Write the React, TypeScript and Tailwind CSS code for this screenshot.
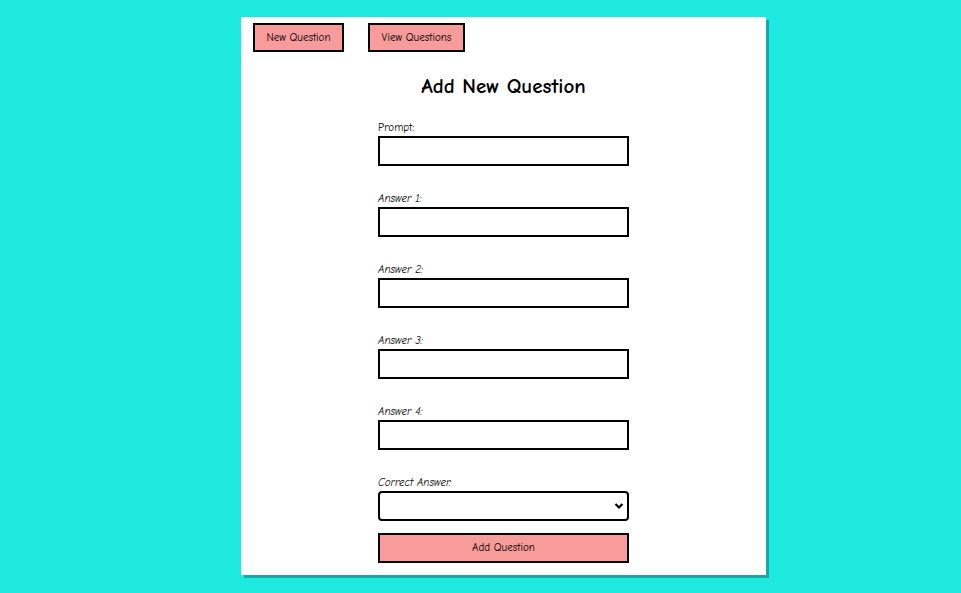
import React from "react";

const font = { fontFamily: '"Comic Sans MS", "Comic Neue", "DejaVu Sans", sans-serif' };

const Field: React.FC<{label: string; italic?: boolean}> = ({label, italic}) => (
  <div className="flex flex-col">
    <label className={`h-[14px] text-[11px] leading-[12px] text-black ${italic ? "italic" : ""}`}>{label}</label>
    <input type="text" className="h-[30px] w-[251px] border-2 border-black bg-white" />
  </div>
);

export default function App() {
  return (
    <div className="min-h-[593px] w-full bg-[#1de9df] pt-[17px]" style={font}>
      <div className="ml-[241px] flex h-[558px] w-[525px] flex-col bg-white shadow-[3px_3px_0_#19a9a2]">
        <div className="flex gap-[24px] pl-[12px] pt-[6px]">
          <button className="h-[29px] w-[91px] border-2 border-black bg-[#f79b9b] pt-[2px] text-[11px] text-black">New Question</button>
          <button className="h-[29px] w-[97px] border-2 border-black bg-[#f79b9b] pt-[2px] text-[11px] text-black">View Questions</button>
        </div>
        <h1 className="mt-[21px] text-center text-[21px] font-bold leading-[26px] text-black">Add New Question</h1>
        <div className="ml-[137px] mt-[23px] flex flex-col gap-[27px]">
          <Field label="Prompt:" />
          <Field label="Answer 1:" italic />
          <Field label="Answer 2:" italic />
          <Field label="Answer 3:" italic />
          <Field label="Answer 4:" italic />
          <div className="flex flex-col">
            <label className="h-[14px] text-[11px] italic leading-[12px] text-black">Correct Answer:</label>
            <div className="relative h-[30px] w-[251px]">
              <select className="h-[30px] w-[251px] appearance-none rounded-[4px] border-2 border-black bg-white" />
              <svg className="pointer-events-none absolute right-[5px] top-[11px]" width="10" height="8" viewBox="0 0 10 8">
                <path d="M1.5 2 L5 5.5 L8.5 2" stroke="black" strokeWidth="2.2" fill="none" />
              </svg>
            </div>
            <button className="mt-[12px] h-[30px] w-[251px] border-2 border-black bg-[#f79b9b] text-[11px] text-black">Add Question</button>
          </div>
        </div>
      </div>
    </div>
  );
}
